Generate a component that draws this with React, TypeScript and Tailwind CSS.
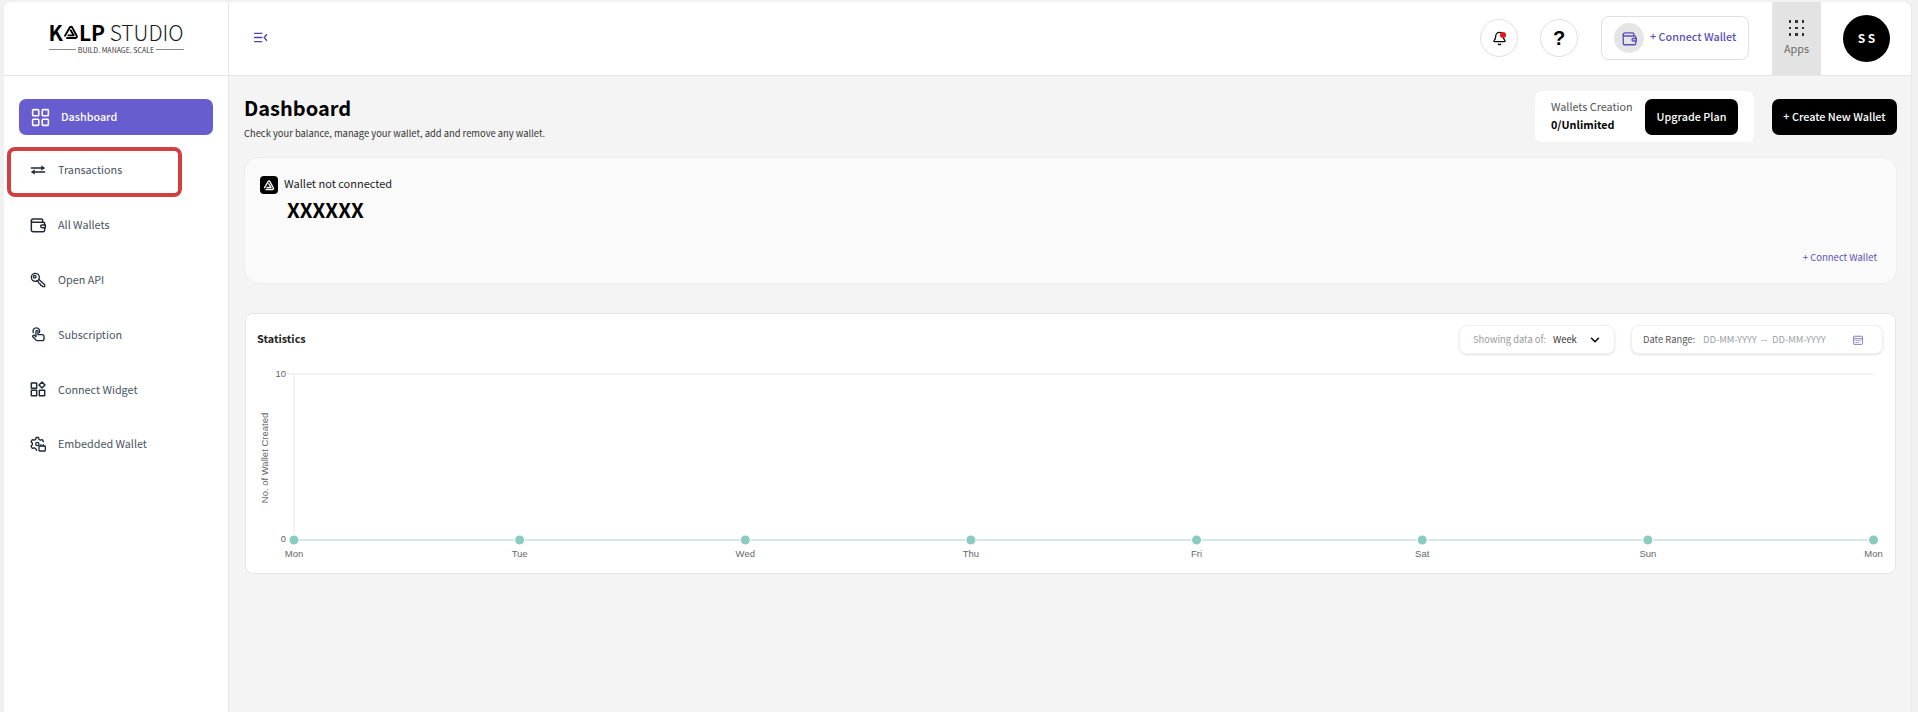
import React from "react";
import { Bell, ChevronDown, LayoutGrid } from "lucide-react";

const FONT = "font-['Noto_Sans_CJK_JP','Noto_Sans',sans-serif]";

type IconProps = { className?: string };

const TransferIcon = ({ className }: IconProps) => (
  <svg viewBox="0 0 24 24" fill="none" stroke="currentColor" strokeWidth="2" strokeLinecap="round" strokeLinejoin="round" className={className}>
    <path d="M2 9h19" />
    <path d="m17 5 5 4-5 4" fill="currentColor" stroke="none" />
    <path d="M22 15H3" />
    <path d="m7 11-5 4 5 4" fill="currentColor" stroke="none" />
  </svg>
);

const WalletIcon = ({ className }: IconProps) => (
  <svg viewBox="0 0 24 24" fill="none" stroke="currentColor" strokeWidth="2.2" strokeLinecap="round" strokeLinejoin="round" className={className}>
    <path d="M19 7V5a2 2 0 0 0-2-2H5a3 3 0 0 0-3 3v13a3 3 0 0 0 3 3h15a2 2 0 0 0 2-2v-3" />
    <path d="M2 6a2 2 0 0 0 2 2h16a2 2 0 0 1 2 2v2" />
    <path d="M23 12h-5a2 2 0 0 0 0 4h5z" />
  </svg>
);

const KeyIcon = ({ className }: IconProps) => (
  <svg viewBox="0 0 24 24" fill="none" stroke="currentColor" strokeWidth="2" strokeLinecap="round" strokeLinejoin="round" className={className}>
    <circle cx="8" cy="8" r="6" />
    <circle cx="7" cy="7" r="2" />
    <path d="m13 11 9 8v3h-3l-1-1.500-2-.5-.5-2-2-.5-.5-2-3-2.500" />
  </svg>
);

const HandIcon = ({ className }: IconProps) => (
  <svg viewBox="0 0 24 24" fill="none" stroke="currentColor" strokeWidth="2" strokeLinecap="round" strokeLinejoin="round" className={className}>
    <path d="M5 10a5 5 0 1 1 9 0" />
    <path d="m8 20-3.500-3.500a1.600 1.600 0 0 1 2.300-2.300L9 16V8a1.500 1.500 0 0 1 3 0v5h6a3 3 0 0 1 3 3v3a3 3 0 0 1-3 3h-7a3 3 0 0 1-3-2z" />
  </svg>
);

const WidgetIcon = ({ className }: IconProps) => (
  <svg viewBox="0 0 24 24" fill="none" stroke="currentColor" strokeWidth="2.2" strokeLinejoin="round" className={className}>
    <rect x="2" y="3" width="8" height="8" />
    <rect x="2" y="14" width="8" height="8" />
    <rect x="14" y="14" width="8" height="8" />
    <path d="m18 1.500 4.500 4.500-4.500 4.500-4.500-4.500z" />
  </svg>
);

const GearBoxIcon = ({ className }: IconProps) => (
  <svg viewBox="0 0 24 24" fill="none" stroke="currentColor" strokeWidth="2" strokeLinecap="round" strokeLinejoin="round" className={className}>
    <path d="M10 21.500 8.500 19l-2.300-1.200-2.700.8L1.500 15l2-1.800v-2.600l-2-1.800 2-3.400 2.700.8L8.500 5l.7-2.800h3.600l.7 2.800 2.200 1.200 2.700-.8 1.700 3" />
    <circle cx="11" cy="12" r="2.500" />
    <rect x="13.500" y="15" width="9.500" height="7.500" rx="1" />
    <path d="M16.500 13v2M20 13v2" />
  </svg>
);

const KnotMark = ({ className }: IconProps) => (
  <svg viewBox="0 0 24 24" fill="none" stroke="currentColor" strokeWidth="2.8" strokeLinecap="round" strokeLinejoin="round" className={className}>
    <path d="M6 21h13a2 2 0 0 0 1.700-3L13.700 5a2 2 0 0 0-3.400 0L3 17.500" />
    <path d="M11.500 9.500 16 17H8" />
  </svg>
);

const navItems = [
  { label: "Transactions", icon: <TransferIcon className="w-[16px] h-[16px]" /> },
  { label: "All Wallets", icon: <WalletIcon className="w-[16px] h-[16px]" /> },
  { label: "Open API", icon: <KeyIcon className="w-[16px] h-[16px]" /> },
  { label: "Subscription", icon: <HandIcon className="w-[16px] h-[16px]" /> },
  { label: "Connect Widget", icon: <WidgetIcon className="w-[16px] h-[16px]" /> },
  { label: "Embedded Wallet", icon: <GearBoxIcon className="w-[16px] h-[16px]" /> },
];

const days = ["Mon", "Tue", "Wed", "Thu", "Fri", "Sat", "Sun", "Mon"];

const Logo = () => (
  <div className="w-[135px] flex flex-col items-center pb-[2px]">
    <div className="flex items-center w-full h-[20px] text-[21px] leading-[20px] text-[#1a1a1a]">
      <span className="font-bold text-black">K</span>
      <KnotMark className="w-[16px] h-[16px] text-black" />
      <span className="font-bold text-black">LP</span>
      <span className="ml-auto font-light">STUDIO</span>
    </div>
    <div className="flex items-center w-full gap-[2px] mt-[4px]">
      <div className="flex-1 h-px bg-[#888]" />
      <span className="text-[7px] leading-[8px] text-[#333] whitespace-nowrap">BUILD. MANAGE. SCALE</span>
      <div className="flex-1 h-px bg-[#888]" />
    </div>
  </div>
);

const Sidebar = () => (
  <aside className="w-[225px] shrink-0 bg-white border-r border-[#e5e5e5] flex flex-col">
    <div className="h-[74px] flex items-center justify-center border-b border-[#e5e5e5]">
      <Logo />
    </div>
    <nav className="relative flex flex-col pt-[23px]">
      <div className="ml-[15px] w-[194px] h-[36px] rounded-[7px] bg-[#675dcf] text-white flex items-center gap-[10px] pl-[11px] text-[10.8px] font-medium">
        <LayoutGrid className="w-[21px] h-[21px]" strokeWidth={1.8} />
        <span className="pb-[2px]">Dashboard</span>
      </div>
      <div className="mt-[7.6px] flex flex-col">
        {navItems.map((item) => (
          <div key={item.label} className="h-[54.8px] pl-[26px] flex items-center gap-[12px] text-[10.8px] text-[#4b5563]">
            <span className="text-[#1f2937] flex">{item.icon}</span>
            <span className="pb-[1px]">{item.label}</span>
          </div>
        ))}
      </div>
      <div className="absolute left-[3px] top-[71px] w-[175px] h-[50px] rounded-[8px] border-[4px] border-[#d23f3f]" />
    </nav>
  </aside>
);

const TopBar = () => (
  <header className="h-[74px] bg-white border-b border-[#e5e5e5] flex items-center pl-[24px]">
    <svg viewBox="0 0 16 12" fill="none" stroke="#4f46a8" strokeWidth="1.5" className="w-[15px] h-[11px] mb-[2px]">
      <path d="M1 1.5h9M1 6h9M1 10.500h9M15 2.500 12 6l3 3.500" />
    </svg>
    <div className="ml-auto flex items-center h-full">
      <div className="mb-[1px] w-[38px] h-[38px] rounded-full border border-[#e0e0e0] flex items-center justify-center relative">
        <Bell className="w-[15px] h-[15px] text-black" strokeWidth={2} />
        <span className="absolute top-[12px] left-[19px] w-[6px] h-[6px] rounded-full bg-[#e8141c]" />
      </div>
      <div className="mb-[1px] ml-[22px] w-[38px] h-[38px] rounded-full border border-[#e0e0e0] flex items-center justify-center text-[20px] font-bold text-black font-['Liberation_Sans',sans-serif]">?</div>
      <div className="mb-[1px] ml-[23px] w-[148px] h-[44px] rounded-[8px] border border-[#e0e0e0] flex items-center pl-[12px] gap-[6px]">
        <span className="w-[30px] h-[30px] rounded-full bg-[#e5e5e5] flex items-center justify-center text-[#5b50b8]">
          <WalletIcon className="w-[15px] h-[15px]" />
        </span>
        <span className="pb-[3px] text-[10.8px] font-medium text-[#5b50b8] whitespace-nowrap">+ Connect Wallet</span>
      </div>
      <div className="ml-[23px] w-[49px] h-full bg-[#e3e3e3] flex flex-col items-center justify-center pb-[2px]">
        <div className="grid grid-cols-3 gap-[4px] mb-[5px]">
          {Array.from({ length: 9 }).map((_, i) => (
            <span key={i} className="w-[2.5px] h-[2.5px] bg-[#333]" />
          ))}
        </div>
        <span className="text-[10.8px] leading-[14px] text-[#6b6b6b]">Apps</span>
      </div>
      <div className="mb-[1px] ml-[22px] mr-[21px] w-[47px] h-[47px] rounded-full bg-black text-white flex items-center justify-center text-[12px] font-bold whitespace-pre">S S</div>
    </div>
  </header>
);

// svg coordinates are page coordinates, the viewBox starts where the card's inside starts
const Chart = () => {
  const left = 294;
  const right = 1873.5;
  const step = (right - left) / 7;
  return (
    <svg viewBox="246 360 1649 205" className="block w-full h-[205px]">
      <g fontFamily="'Liberation Sans',sans-serif" fontSize="9.5" fill="#666">
        <line x1={left - 8} x2={right} y1="374" y2="374" stroke="#e8e8e8" />
        <line x1={left} x2={left} y1="374" y2="540" stroke="#e8e8e8" />
        <line x1={left} x2={right} y1="540" y2="540" stroke="#c3e3dd" strokeWidth="1.5" />
        <text x={left - 8} y="376.500" textAnchor="end">10</text>
        <text x={left - 8} y="542" textAnchor="end">0</text>
        <text transform="rotate(-90 268 458)" x="268" y="458" textAnchor="middle">No. of Wallet Created</text>
        {days.map((d, i) => (
          <g key={i}>
            <circle cx={left + step * i} cy="540" r="5" fill="#8ccbc0" stroke="#fff" strokeWidth="1" />
            <text x={left + step * i} y="557" textAnchor="middle">{d}</text>
          </g>
        ))}
      </g>
    </svg>
  );
};

export default function App() {
  return (
    <div className={`${FONT} w-[1918px] h-[712px] overflow-hidden bg-[#f1f1f1] pt-[2px] pl-[4px] pr-[6px]`}>
      <div className="flex h-full rounded-t-[8px] overflow-hidden bg-[#f4f4f4] border-r border-[#e8e8e8]">
        <Sidebar />
        <main className="flex-1 min-w-0 flex flex-col">
          <TopBar />
          <div className="flex-1 pl-[15px] pr-[14px]">
            <div className="flex items-start h-[81px]">
              <div className="pt-[19px]">
                <h1 className="text-[20px] leading-[26px] font-bold text-black">Dashboard</h1>
                <p className="text-[9.4px] leading-[14px] mt-[5px] text-[#333]">Check your balance, manage your wallet, add and remove any wallet.</p>
              </div>
              <div className="ml-auto mt-[15px] flex items-center">
                <div className="w-[219px] h-[51px] bg-white rounded-[7px] flex items-center justify-between pl-[16px] pr-[16px]">
                  <div className="pb-[3px]">
                    <div className="text-[10.8px] leading-[18px] text-[#555]">Wallets Creation</div>
                    <div className="text-[10.8px] leading-[18px] font-bold text-black">0/Unlimited</div>
                  </div>
                  <button className="w-[93px] h-[36px] pb-[1px] rounded-[7px] bg-black text-white text-[10.8px] font-medium">Upgrade Plan</button>
                </div>
                <button className="ml-[18px] w-[125px] h-[36px] pb-[1px] rounded-[7px] bg-black text-white text-[10.8px] font-medium">+ Create New Wallet</button>
              </div>
            </div>
            <section className="h-[127px] rounded-[14px] bg-[#fafafa] border border-[#eeeeee] pl-[15px] pr-[19px] pt-[17px] flex flex-col">
              <div className="flex items-center gap-[6px]">
                <span className="w-[18px] h-[18px] rounded-[4px] bg-black flex items-center justify-center text-white">
                  <KnotMark className="w-[12px] h-[12px]" />
                </span>
                <span className="pb-[3px] text-[11px] leading-[16px] text-[#222]">Wallet not connected</span>
              </div>
              <div className="ml-[27px] mt-[2px] text-[20.4px] leading-[26px] font-bold text-black">XXXXXX</div>
              <div className="mt-auto mb-[19px] self-end text-[9.5px] leading-[14px] text-[#5b50b8]">+ Connect Wallet</div>
            </section>
            <section className="mt-[29px] mx-[1px] h-[261px] rounded-[8px] bg-white border border-[#e6e6e6] pt-[11px]">
              <div className="flex items-center h-[29px] pl-[11px] pr-[12px]">
                <h2 className="pb-[2px] text-[10.8px] font-bold text-[#222]">Statistics</h2>
                <div className="ml-auto flex items-center gap-[16px]">
                  <div className="w-[156px] h-[29px] rounded-[8px] border border-[#f0f0f0] shadow-sm flex items-center pl-[13px] text-[9.4px] whitespace-nowrap">
                    <span className="text-[#9a9a9a] w-[80px]">Showing data of:</span>
                    <span className="text-[#333]">Week</span>
                    <ChevronDown className="ml-auto mr-[12px] w-[14px] h-[14px] text-black" strokeWidth={2.5} />
                  </div>
                  <div className="w-[252px] h-[29px] rounded-[8px] border border-[#f0f0f0] shadow-sm flex items-center pl-[11px] text-[9.4px] whitespace-nowrap">
                    <span className="text-[#555] w-[60px]">Date Range:</span>
                    <span className="text-[#9aa0a6] w-[58px]">DD-MM-YYYY</span>
                    <span className="text-[#9aa0a6] w-[11px]">--</span>
                    <span className="text-[#9aa0a6]">DD-MM-YYYY</span>
                    <svg viewBox="0 0 16 16" fill="none" stroke="#5b50b8" strokeWidth="1.2" className="ml-auto mr-[19px] w-[10px] h-[10px]">
                      <rect x="1" y="2" width="14" height="13" rx="1" />
                      <path d="M1 6h14M4 9h2M7 9h2M10 9h2M4 12h2M7 12h2" />
                    </svg>
                  </div>
                </div>
              </div>
              <div className="mt-[6px]">
                <Chart />
              </div>
            </section>
          </div>
        </main>
      </div>
    </div>
  );
}
